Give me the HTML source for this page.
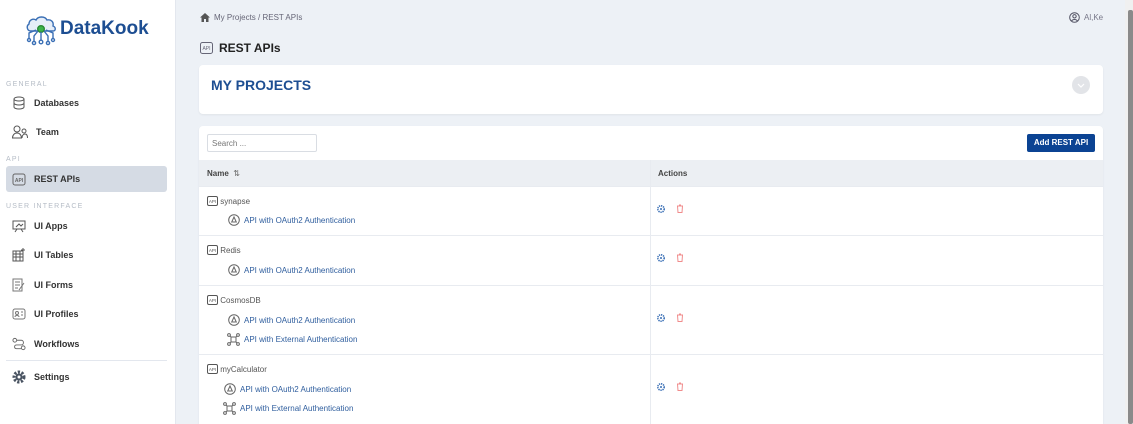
<!DOCTYPE html>
<html><head><meta charset="utf-8"><style>
*{box-sizing:border-box;margin:0;padding:0}
html{width:1133px;height:424px;overflow:hidden}
body{width:1133px;height:424px;overflow:hidden;background:#edf1f6;font-family:"Liberation Sans",sans-serif;position:relative;color:#333}
.abs{position:absolute}
#side{left:0;top:0;width:176px;height:424px;background:#fff;border-right:1px solid #e3e7ee}
.sec{position:absolute;left:6px;font-size:7px;letter-spacing:1.2px;color:#b5bcc6}
.item{position:absolute;left:6px;width:161px;height:26px;font-size:9px;font-weight:bold;color:#333;display:flex;align-items:center;padding-left:6px;border-radius:3px}
.item svg{margin-right:8px}
.item.act{background:#d5dbe4}
.card{position:absolute;background:#fff;border-radius:4px;box-shadow:0 1px 2px rgba(0,0,0,.06)}
.row{position:absolute;left:0;width:904px;border-top:1px solid #e8ebf0}
.nm{position:absolute;left:8px;font-size:8px;color:#555;display:flex;align-items:center}
.lk{position:absolute;font-size:8px;color:#2f5e9e;display:flex;align-items:center}
.lk svg{margin-right:4px}
.act2{position:absolute;left:458px;display:flex;gap:11px;align-items:center}
</style></head><body>
<div id="side" class="abs">
  <svg class="abs" style="left:24px;top:8px" width="34" height="44" viewBox="0 0 34 40" fill="none" stroke="#3a6fb5" stroke-width="1.4">
    <path d="M7 21c-4 0-5-5-2-7 0-4 4-6 7-4 2-4 9-4 11 0 4-1 7 2 6 6 3 1 3 5 0 5z" fill="#e6eef8"/>
    <circle cx="17" cy="19" r="3.3" fill="#3cb44a" stroke="#2a8a35"/>
    <path d="M17 22v8M14 21l-4 5v5M20 21l4 5v5M12 20l-7 3v5M22 20l7 3v5"/>
    <circle cx="17" cy="32" r="1.8"/><circle cx="10" cy="33" r="1.6"/><circle cx="24" cy="33" r="1.6"/><circle cx="5" cy="30" r="1.5"/><circle cx="29" cy="30" r="1.5"/>
  </svg>
  <div class="abs" style="left:60px;top:18px;font-size:19px;font-weight:bold;color:#1d4e92">DataKook</div>
  <div class="sec" style="top:81px">GENERAL</div>
  <div class="item" style="top:90px"><svg width="14" height="14" viewBox="0 0 14 14" fill="none" stroke="#555"><ellipse cx="7" cy="3" rx="5" ry="2"/><path d="M2 3v8c0 1 2 2 5 2s5-1 5-2V3M2 7c0 1 2 2 5 2s5-1 5-2"/></svg>Databases</div>
  <div class="item" style="top:119px"><svg width="16" height="14" viewBox="0 0 16 14" fill="none" stroke="#555"><circle cx="5" cy="4" r="3"/><path d="M0.5 13c0-3 2-5 4.5-5s4.5 2 4.5 5z"/><circle cx="12" cy="6" r="2"/><path d="M10 13c0-2 1-4 3-4s2.5 2 2.5 4"/></svg>Team</div>
  <div class="sec" style="top:156px">API</div>
  <div class="item act" style="top:166px"><svg width="14" height="13" viewBox="0 0 14 13" fill="none" stroke="#666"><rect x="1" y="1" width="12" height="11" rx="2"/><text x="7" y="9" font-size="5" fill="#666" stroke="none" text-anchor="middle">API</text></svg>REST APIs</div>
  <div class="sec" style="top:203px">USER INTERFACE</div>
  <div class="item" style="top:213px"><svg width="14" height="14" viewBox="0 0 14 14" fill="none" stroke="#555"><rect x="1" y="2" width="12" height="8"/><path d="M4 8l3-3 2 2 2-2M5 10l-2 3M9 10l2 3"/></svg>UI Apps</div>
  <div class="item" style="top:242px"><svg width="14" height="14" viewBox="0 0 14 14" fill="none" stroke="#555"><rect x="1" y="3" width="10" height="10"/><path d="M1 6h10M1 9h10M4 3v10M8 3v10M11 0v4M9 2h4"/></svg>UI Tables</div>
  <div class="item" style="top:272px"><svg width="14" height="14" viewBox="0 0 14 14" fill="none" stroke="#777"><rect x="1" y="1" width="9" height="12"/><path d="M3 4h5M3 7h5M3 10h3M12 5l-5 7"/></svg>UI Forms</div>
  <div class="item" style="top:301px"><svg width="14" height="14" viewBox="0 0 14 14" fill="none" stroke="#777"><rect x="1" y="2" width="12" height="10" rx="2"/><circle cx="5" cy="6" r="1.5"/><path d="M3 10c0-2 4-2 4 0M9 5h2M9 8h2"/></svg>UI Profiles</div>
  <div class="item" style="top:331px"><svg width="14" height="14" viewBox="0 0 15 14" fill="none" stroke="#666"><circle cx="3" cy="3" r="2"/><circle cx="12" cy="11" r="2"/><path d="M5 3h5c3 0 3 5 0 5H5c-3 0-3 4 0 4h5"/></svg>Workflows</div>
  <div class="abs" style="left:6px;top:360px;width:161px;border-top:1px solid #e3e7ee"></div>
  <div class="item" style="top:364px"><svg width="14" height="14" viewBox="0 0 14 14"><circle cx="7" cy="7" r="5" fill="none" stroke="#4a5462" stroke-width="3" stroke-dasharray="2.2 1.5"/><circle cx="7" cy="7" r="3.5" fill="#4a5462"/><circle cx="7" cy="7" r="1.5" fill="#fff"/></svg>Settings</div>
</div>

<svg class="abs" style="left:200px;top:13px" width="10" height="9" viewBox="0 0 10 9"><path d="M5 0L0 4.5h1.5V9h2.5V6h2v3h2.5V4.5H10z" fill="#555"/></svg>
<div class="abs" style="left:214px;top:13px;font-size:8px;color:#667">My Projects / REST APIs</div>
<svg class="abs" style="left:1069px;top:12px" width="11" height="11" viewBox="0 0 11 11" fill="none" stroke="#556"><circle cx="5.5" cy="5.5" r="4.8"/><circle cx="5.5" cy="4.3" r="1.7"/><path d="M2.6 9c1-2 4.8-2 5.8 0"/></svg>
<div class="abs" style="left:1084px;top:13px;font-size:8px;color:#778">Al,Ke</div>
<svg class="abs" style="left:200px;top:42px" width="13" height="12" viewBox="0 0 13 12" fill="none" stroke="#667"><rect x="0.5" y="0.5" width="12" height="11" rx="2"/><text x="6.5" y="8" font-size="5" fill="#667" stroke="none" text-anchor="middle">API</text></svg>
<div class="abs" style="left:219px;top:41px;font-size:12px;font-weight:bold;color:#222">REST APIs</div>

<div class="card" style="left:199px;top:65px;width:904px;height:49px">
  <div class="abs" style="left:12px;top:12px;font-size:14px;font-weight:bold;color:#1d4e92">MY PROJECTS</div>
  <div class="abs" style="left:873px;top:11px;width:18px;height:18px;border-radius:50%;background:#e2e4e8"></div>
  <svg class="abs" style="left:878px;top:18px" width="8" height="5" viewBox="0 0 8 5" fill="none" stroke="#fff" stroke-width="1.2"><path d="M1 1l3 3 3-3"/></svg>
</div>

<div class="card" style="left:199px;top:126px;width:904px;height:298px;overflow:hidden;border-radius:4px 4px 0 0">
  <div class="abs" style="left:8px;top:8px;width:110px;height:18px;border:1px solid #d9dde3;border-radius:2px;font-size:8px;color:#777;padding:4px 4px">Search ...</div>
  <div class="abs" style="left:828px;top:8px;width:68px;height:18px;background:#0b4393;border-radius:2px;color:#fff;font-size:8px;font-weight:bold;text-align:center;line-height:18px">Add REST API</div>
  <div class="abs" style="left:0;top:34px;width:904px;height:26px;background:#eceff3"></div>
  <div class="abs" style="left:8px;top:43px;font-size:8px;font-weight:bold;color:#444">Name &nbsp;<span style="font-weight:normal;color:#666">⇅</span></div>
  <div class="abs" style="left:459px;top:43px;font-size:8px;font-weight:bold;color:#444">Actions</div>
  <div class="abs" style="left:451px;top:34px;height:280px;border-left:1px solid #e8ebf0"></div>

  <div class="row" style="top:60px">
    <div class="nm" style="top:9px"><svg width="11" height="10" viewBox="0 0 11 10" fill="none" stroke="#555"><rect x="0.5" y="0.5" width="10" height="9" rx="1.5"/><text x="5.5" y="7" font-size="4.5" fill="#555" stroke="none" text-anchor="middle">API</text></svg>&nbsp;synapse</div>
    <div class="lk" style="left:29px;top:27px"><svg width="12" height="12" viewBox="0 0 12 12" fill="none" stroke="#666"><circle cx="6" cy="6" r="5.3"/><path d="M3.5 8.5L6 3l2.5 5.5M4.3 8h3.4"/></svg>API with OAuth2 Authentication</div>
    <div class="act2" style="top:17px"><svg width="8" height="8" viewBox="0 0 8 8"><circle cx="4" cy="4" r="3.2" fill="none" stroke="#3a6fb5" stroke-width="1.6" stroke-dasharray="1.3 0.8"/><circle cx="4" cy="4" r="1" fill="#3a6fb5"/></svg><svg width="8" height="9" viewBox="0 0 8 9" fill="none" stroke="#f08c8c"><path d="M1 2h6M3 1h2M1.5 2l.5 6.5h4L6.5 2"/></svg></div>
  </div>
  <div class="row" style="top:109px">
    <div class="nm" style="top:9px"><svg width="11" height="10" viewBox="0 0 11 10" fill="none" stroke="#555"><rect x="0.5" y="0.5" width="10" height="9" rx="1.5"/><text x="5.5" y="7" font-size="4.5" fill="#555" stroke="none" text-anchor="middle">API</text></svg>&nbsp;Redis</div>
    <div class="lk" style="left:29px;top:28px"><svg width="12" height="12" viewBox="0 0 12 12" fill="none" stroke="#666"><circle cx="6" cy="6" r="5.3"/><path d="M3.5 8.5L6 3l2.5 5.5M4.3 8h3.4"/></svg>API with OAuth2 Authentication</div>
    <div class="act2" style="top:17px"><svg width="8" height="8" viewBox="0 0 8 8"><circle cx="4" cy="4" r="3.2" fill="none" stroke="#3a6fb5" stroke-width="1.6" stroke-dasharray="1.3 0.8"/><circle cx="4" cy="4" r="1" fill="#3a6fb5"/></svg><svg width="8" height="9" viewBox="0 0 8 9" fill="none" stroke="#f08c8c"><path d="M1 2h6M3 1h2M1.5 2l.5 6.5h4L6.5 2"/></svg></div>
  </div>
  <div class="row" style="top:159px">
    <div class="nm" style="top:9px"><svg width="11" height="10" viewBox="0 0 11 10" fill="none" stroke="#555"><rect x="0.5" y="0.5" width="10" height="9" rx="1.5"/><text x="5.5" y="7" font-size="4.5" fill="#555" stroke="none" text-anchor="middle">API</text></svg>&nbsp;CosmosDB</div>
    <div class="lk" style="left:29px;top:28px"><svg width="12" height="12" viewBox="0 0 12 12" fill="none" stroke="#666"><circle cx="6" cy="6" r="5.3"/><path d="M3.5 8.5L6 3l2.5 5.5M4.3 8h3.4"/></svg>API with OAuth2 Authentication</div>
    <div class="lk" style="left:28px;top:47px"><svg width="13" height="13" viewBox="0 0 13 13" fill="none" stroke="#666"><circle cx="2" cy="2" r="1.4"/><circle cx="11" cy="2" r="1.4"/><circle cx="2" cy="11" r="1.4"/><circle cx="11" cy="11" r="1.4"/><rect x="4" y="4" width="5" height="5"/><path d="M3 3l1 1M10 3l-1 1M3 10l1-1M10 10l-1-1"/></svg>API with External Authentication</div>
    <div class="act2" style="top:27px"><svg width="8" height="8" viewBox="0 0 8 8"><circle cx="4" cy="4" r="3.2" fill="none" stroke="#3a6fb5" stroke-width="1.6" stroke-dasharray="1.3 0.8"/><circle cx="4" cy="4" r="1" fill="#3a6fb5"/></svg><svg width="8" height="9" viewBox="0 0 8 9" fill="none" stroke="#f08c8c"><path d="M1 2h6M3 1h2M1.5 2l.5 6.5h4L6.5 2"/></svg></div>
  </div>
  <div class="row" style="top:228px">
    <div class="nm" style="top:9px"><svg width="11" height="10" viewBox="0 0 11 10" fill="none" stroke="#555"><rect x="0.5" y="0.5" width="10" height="9" rx="1.5"/><text x="5.5" y="7" font-size="4.5" fill="#555" stroke="none" text-anchor="middle">API</text></svg>&nbsp;myCalculator</div>
    <div class="lk" style="left:25px;top:28px"><svg width="12" height="12" viewBox="0 0 12 12" fill="none" stroke="#666"><circle cx="6" cy="6" r="5.3"/><path d="M3.5 8.5L6 3l2.5 5.5M4.3 8h3.4"/></svg>API with OAuth2 Authentication</div>
    <div class="lk" style="left:24px;top:47px"><svg width="13" height="13" viewBox="0 0 13 13" fill="none" stroke="#666"><circle cx="2" cy="2" r="1.4"/><circle cx="11" cy="2" r="1.4"/><circle cx="2" cy="11" r="1.4"/><circle cx="11" cy="11" r="1.4"/><rect x="4" y="4" width="5" height="5"/><path d="M3 3l1 1M10 3l-1 1M3 10l1-1M10 10l-1-1"/></svg>API with External Authentication</div>
    <div class="act2" style="top:27px"><svg width="8" height="8" viewBox="0 0 8 8"><circle cx="4" cy="4" r="3.2" fill="none" stroke="#3a6fb5" stroke-width="1.6" stroke-dasharray="1.3 0.8"/><circle cx="4" cy="4" r="1" fill="#3a6fb5"/></svg><svg width="8" height="9" viewBox="0 0 8 9" fill="none" stroke="#f08c8c"><path d="M1 2h6M3 1h2M1.5 2l.5 6.5h4L6.5 2"/></svg></div>
  </div>
</div>

<div class="abs" style="left:1125px;top:0;width:8px;height:424px;background:#f0f0f0"></div>
<div class="abs" style="left:1128px;top:10px;width:5px;height:414px;background:#8a8a8a;border-radius:2px"></div>
</body></html>
